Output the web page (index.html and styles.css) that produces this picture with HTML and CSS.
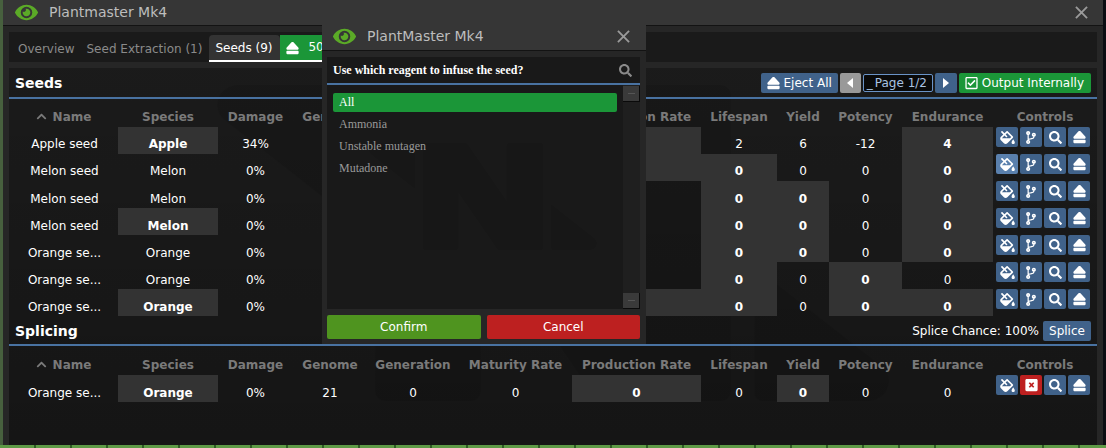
FILE: index.html
```html
<!DOCTYPE html>
<html lang="en">
<head>
<meta charset="utf-8">
<title>Plantmaster Mk4</title>
<link rel="stylesheet" href="styles.css">
</head>
<body>
<svg class="defs" width="0" height="0" aria-hidden="true">
  <symbol id="i-eye" viewBox="0 0 576 512"><path d="M572.52 241.4C518.29 135.59 410.93 64 288 64S57.68 135.64 3.48 241.41a32.35 32.35 0 0 0 0 29.19C57.71 376.41 165.07 448 288 448s230.32-71.64 284.52-177.41a32.35 32.35 0 0 0 0-29.19zM288 400a144 144 0 1 1 144-144 143.93 143.93 0 0 1-144 144zm0-240a95.31 95.31 0 0 0-25.31 3.79 47.85 47.85 0 0 1-66.9 66.9A95.78 95.78 0 1 0 288 160z"/></symbol>
  <symbol id="i-eject" viewBox="0 0 448 512"><path d="M448 384v64c0 17.673-14.327 32-32 32H32c-17.673 0-32-14.327-32-32v-64c0-17.673 14.327-32 32-32h384c17.673 0 32 14.327 32 32zM48.053 320h351.886c41.651 0 63.581-49.674 35.383-80.435L259.383 47.558c-19.014-20.743-51.751-20.744-70.767 0L12.67 239.565C-15.475 270.268 6.324 320 48.053 320z"/></symbol>
  <symbol id="i-search" viewBox="0 0 512 512"><path d="M505 442.7L405.3 343c-4.5-4.5-10.6-7-17-7H372c27.6-35.3 44-79.7 44-128C416 93.1 322.9 0 208 0S0 93.1 0 208s93.1 208 208 208c48.3 0 92.7-16.4 128-44v16.3c0 6.4 2.5 12.5 7 17l99.7 99.7c9.4 9.4 24.6 9.4 33.9 0l28.3-28.3c9.4-9.4 9.4-24.6.1-34zM208 336c-70.7 0-128-57.2-128-128 0-70.7 57.2-128 128-128 70.7 0 128 57.2 128 128 0 70.7-57.2 128-128 128z"/></symbol>
  <symbol id="i-branch" viewBox="0 0 384 512"><path d="M384 144c0-44.2-35.8-80-80-80s-80 35.8-80 80c0 36.4 24.3 67.1 57.5 76.8-.6 16.1-4.2 28.5-11 36.9-15.4 19.2-49.3 22.4-85.2 25.7-28.2 2.6-57.4 5.4-81.3 16.9v-144c32.5-10.2 56-40.5 56-76.3 0-44.2-35.8-80-80-80S0 35.8 0 80c0 35.8 23.5 66.1 56 76.3v199.3C23.5 365.9 0 396.2 0 432c0 44.2 35.8 80 80 80s80-35.8 80-80c0-34-21.2-63.1-51.2-74.6 3.1-5.2 7.8-9.8 14.9-13.4 16.2-8.2 40.4-10.4 66.1-12.8 42.2-3.9 90-8.4 118.2-43.4 14-17.4 21.1-39.8 21.6-67.9 31.6-10.8 54.4-40.7 54.4-75.9zM80 64c8.8 0 16 7.2 16 16s-7.2 16-16 16-16-7.2-16-16 7.2-16 16-16zm0 384c-8.8 0-16-7.2-16-16s7.2-16 16-16 16 7.2 16 16-7.2 16-16 16zm224-320c8.8 0 16 7.2 16 16s-7.2 16-16 16-16-7.2-16-16 7.2-16 16-16z"/></symbol>
  <symbol id="i-drip" viewBox="0 0 576 512"><path d="M512 320s-64 92.65-64 128c0 35.35 28.66 64 64 64s64-28.65 64-64-64-128-64-128zm-9.37-102.94L294.94 9.37C288.69 3.12 280.5 0 272.31 0s-16.38 3.12-22.62 9.37l-81.59 81.59L81.94 4.69c-6.25-6.25-16.38-6.25-22.63 0L36.69 27.31c-6.25 6.25-6.25 16.38 0 22.63l86.19 86.18-94.76 94.76c-37.49 37.49-37.49 98.26 0 135.75l117.19 117.19c18.75 18.74 43.31 28.12 67.87 28.12 24.57 0 49.13-9.37 67.87-28.12l221.57-221.57c12.5-12.5 12.5-32.75.01-45.25zm-116.22 70.97H65.93c1.36-3.84 3.57-7.98 7.43-11.83l13.15-13.15 81.61-81.61 58.6 58.6c12.49 12.49 32.75 12.49 45.24 0 12.49-12.49 12.49-32.75 0-45.24l-58.6-58.6 58.95-58.95 162.44 162.44-48.34 48.34z"/></symbol>
  <symbol id="i-check" viewBox="0 0 448 512"><path d="M400 32H48C21.49 32 0 53.49 0 80v352c0 26.51 21.49 48 48 48h352c26.51 0 48-21.49 48-48V80c0-26.51-21.49-48-48-48zm0 400H48V80h352v352zm-35.864-241.724L191.547 361.48c-4.705 4.667-12.303 4.637-16.97-.068l-90.781-91.516c-4.667-4.705-4.637-12.303.069-16.971l22.719-22.536c4.705-4.667 12.303-4.637 16.97.069l59.792 60.277 141.352-140.216c4.705-4.667 12.303-4.637 16.97.068l22.536 22.718c4.667 4.706 4.637 12.304-.068 16.971z"/></symbol>
  <symbol id="i-xbox" viewBox="0 0 448 512"><path d="M400 32H48C21.5 32 0 53.5 0 80v352c0 26.5 21.5 48 48 48h352c26.500 0 48-21.500 48-48V80c0-26.500-21.500-48-48-48zM326 316l-42 42-60-60-60 60-42-42 60-60-60-60 42-42 60 60 60-60 42 42-60 60z"/></symbol>
  <symbol id="i-chev" viewBox="0 0 448 512"><path d="M240.970 130.300l194.300 194.300c9.400 9.400 9.400 24.600 0 33.900l-22.700 22.700c-9.400 9.400-24.500 9.400-33.900 0L224 227.500 69.300 381.200c-9.400 9.300-24.500 9.300-33.900 0l-22.700-22.700c-9.400-9.400-9.400-24.600 0-33.900l194.300-194.300c9.400-9.400 24.600-9.400 34 0z"/></symbol>
  <symbol id="i-times" viewBox="0 0 14 14"><path d="M1 1l12 12M13 1L1 13" fill="none" stroke="currentColor" stroke-width="2"/></symbol>
  <symbol id="i-logo" viewBox="0 0 425 200"><path d="m178 .04-71.200 0a6.760 6.030 0 0 0-6.760 6.030l0 187.870a6.760 6.030 0 0 0 6.760 6.030l53.110 0a6.760 6.030 0 0 0 6.760-6.030l0-101.540 72.220 104.700a6.760 6.030 0 0 0 5.760 2.870l73.550 0a6.760 6.030 0 0 0 6.760-6.030l0-187.870a6.760 6.030 0 0 0-6.760-6.030l-54.720 0a6.760 6.030 0 0 0-6.760 6.030l0 102.620L183.760 2.910a6.760 6.030 0 0 0-5.760-2.870zM4.840 22.110A13.410 12.500 0 0 1 13.480.04l66.120 0a5.360 5 0 0 1 5.360 5l0 79.880zM420.160 177.890a13.410 12.500 0 0 1-8.630 22.070l-66.120 0a5.360 5 0 0 1-5.360-5l0-79.880z"/></symbol>
</svg>

<div class="window">
  <header class="titlebar">
    <svg class="eye"><use href="#i-eye"/></svg>
    <span class="title-text">Plantmaster Mk4</span>
    <svg class="close"><use href="#i-times"/></svg>
  </header>
  <div class="content">
    <svg class="watermark watermark-main"><use href="#i-logo"/></svg>
    <nav class="tabs">
      <span class="tab">Overview</span>
      <span class="tab">Seed Extraction (1)</span>
      <div class="tab-active">
        <span class="tab-label">Seeds (9)</span>
        <span class="btn btn-green tab-eject"><svg class="ic"><use href="#i-eject"/></svg>50u</span>
      </div>
    </nav>
    <section class="panel">
      <div class="panel-head">
        <h2 class="panel-title">Seeds</h2>
        <div class="toolbar">
          <span class="btn btn-blue btn-bar"><svg class="ic"><use href="#i-eject"/></svg>Eject All</span>
          <span class="btn btn-off btn-arrow"><svg class="tri" viewBox="0 0 6 10"><path d="M6 0v10L0 5z"/></svg></span>
          <span class="page-input"><span class="cursor">_</span>Page 1/2</span>
          <span class="btn btn-blue btn-arrow btn-next"><svg class="tri" viewBox="0 0 6 10"><path d="M0 0v10l6-5z"/></svg></span>
          <span class="btn btn-green btn-bar btn-wide"><svg class="ic"><use href="#i-check"/></svg>Output Internally</span>
        </div>
      </div>
      <table class="grid">
        <colgroup><col class="c1"><col class="c2"><col class="c3"><col class="c4"><col class="c5"><col class="c6"><col class="c7"><col class="c8"><col class="c9"><col class="c10"><col class="c11"><col></colgroup>
        <thead><tr><th><svg class="sort"><use href="#i-chev"/></svg>Name</th><th>Species</th><th>Damage</th><th>Genome</th><th>Generation</th><th>Maturity Rate</th><th>Production Rate</th><th>Lifespan</th><th>Yield</th><th>Potency</th><th>Endurance</th><th>Controls</th></tr></thead>
        <tbody>
          <tr><td>Apple seed</td><td class="hi">Apple</td><td>34%</td><td>0</td><td>0</td><td>0</td><td class="hi">0</td><td>2</td><td>6</td><td>-12</td><td class="hi">4</td><td class="ctl"><div class="ctls"><span class="btn-ic"><svg class="ic-d"><use href="#i-drip"/></svg></span><span class="btn-ic"><svg class="ic-b"><use href="#i-branch"/></svg></span><span class="btn-ic"><svg class="ic-s"><use href="#i-search"/></svg></span><span class="btn-ic"><svg class="ic-e"><use href="#i-eject"/></svg></span></div></td></tr>
          <tr><td>Melon seed</td><td>Melon</td><td>0%</td><td>0</td><td>0</td><td>0</td><td class="hi">0</td><td class="hi">0</td><td>0</td><td>0</td><td class="hi">0</td><td class="ctl"><div class="ctls"><span class="btn-ic btn-ic-hover"><svg class="ic-d"><use href="#i-drip"/></svg></span><span class="btn-ic"><svg class="ic-b"><use href="#i-branch"/></svg></span><span class="btn-ic"><svg class="ic-s"><use href="#i-search"/></svg></span><span class="btn-ic"><svg class="ic-e"><use href="#i-eject"/></svg></span></div></td></tr>
          <tr><td>Melon seed</td><td>Melon</td><td>0%</td><td>0</td><td>0</td><td>0</td><td>0</td><td class="hi">0</td><td class="hi">0</td><td>0</td><td class="hi">0</td><td class="ctl"><div class="ctls"><span class="btn-ic"><svg class="ic-d"><use href="#i-drip"/></svg></span><span class="btn-ic"><svg class="ic-b"><use href="#i-branch"/></svg></span><span class="btn-ic"><svg class="ic-s"><use href="#i-search"/></svg></span><span class="btn-ic"><svg class="ic-e"><use href="#i-eject"/></svg></span></div></td></tr>
          <tr><td>Melon seed</td><td class="hi">Melon</td><td>0%</td><td>0</td><td>0</td><td>0</td><td>0</td><td class="hi">0</td><td class="hi">0</td><td>0</td><td class="hi">0</td><td class="ctl"><div class="ctls"><span class="btn-ic"><svg class="ic-d"><use href="#i-drip"/></svg></span><span class="btn-ic"><svg class="ic-b"><use href="#i-branch"/></svg></span><span class="btn-ic"><svg class="ic-s"><use href="#i-search"/></svg></span><span class="btn-ic"><svg class="ic-e"><use href="#i-eject"/></svg></span></div></td></tr>
          <tr><td>Orange se...</td><td>Orange</td><td>0%</td><td>0</td><td>0</td><td>0</td><td>0</td><td class="hi">0</td><td class="hi">0</td><td>0</td><td class="hi">0</td><td class="ctl"><div class="ctls"><span class="btn-ic"><svg class="ic-d"><use href="#i-drip"/></svg></span><span class="btn-ic"><svg class="ic-b"><use href="#i-branch"/></svg></span><span class="btn-ic"><svg class="ic-s"><use href="#i-search"/></svg></span><span class="btn-ic"><svg class="ic-e"><use href="#i-eject"/></svg></span></div></td></tr>
          <tr><td>Orange se...</td><td>Orange</td><td>0%</td><td>0</td><td>0</td><td>0</td><td>0</td><td class="hi">0</td><td>0</td><td class="hi">0</td><td>0</td><td class="ctl"><div class="ctls"><span class="btn-ic"><svg class="ic-d"><use href="#i-drip"/></svg></span><span class="btn-ic"><svg class="ic-b"><use href="#i-branch"/></svg></span><span class="btn-ic"><svg class="ic-s"><use href="#i-search"/></svg></span><span class="btn-ic"><svg class="ic-e"><use href="#i-eject"/></svg></span></div></td></tr>
          <tr><td>Orange se...</td><td class="hi">Orange</td><td>0%</td><td>0</td><td>0</td><td>0</td><td class="hi">0</td><td class="hi">0</td><td>0</td><td class="hi">0</td><td class="hi">0</td><td class="ctl"><div class="ctls"><span class="btn-ic"><svg class="ic-d"><use href="#i-drip"/></svg></span><span class="btn-ic"><svg class="ic-b"><use href="#i-branch"/></svg></span><span class="btn-ic"><svg class="ic-s"><use href="#i-search"/></svg></span><span class="btn-ic"><svg class="ic-e"><use href="#i-eject"/></svg></span></div></td></tr>
        </tbody>
      </table>
      <div class="panel-head panel-head-2">
        <h2 class="panel-title">Splicing</h2>
        <div class="toolbar">
          <span class="chance">Splice Chance: 100%</span>
          <span class="btn btn-blue btn-splice">Splice</span>
        </div>
      </div>
      <table class="grid grid-2">
        <colgroup><col class="c1"><col class="c2"><col class="c3"><col class="c4"><col class="c5"><col class="c6"><col class="c7"><col class="c8"><col class="c9"><col class="c10"><col class="c11"><col></colgroup>
        <thead><tr><th><svg class="sort"><use href="#i-chev"/></svg>Name</th><th>Species</th><th>Damage</th><th>Genome</th><th>Generation</th><th>Maturity Rate</th><th>Production Rate</th><th>Lifespan</th><th>Yield</th><th>Potency</th><th>Endurance</th><th>Controls</th></tr></thead>
        <tbody>
          <tr><td>Orange se...</td><td class="hi">Orange</td><td>0%</td><td>21</td><td>0</td><td>0</td><td class="hi">0</td><td>0</td><td class="hi">0</td><td>0</td><td>0</td><td class="ctl"><div class="ctls"><span class="btn-ic"><svg class="ic-d"><use href="#i-drip"/></svg></span><span class="btn-ic btn-ic-red"><svg class="ic-x"><use href="#i-xbox"/></svg></span><span class="btn-ic"><svg class="ic-s"><use href="#i-search"/></svg></span><span class="btn-ic"><svg class="ic-e"><use href="#i-eject"/></svg></span></div></td></tr>
        </tbody>
      </table>
    </section>
  </div>
</div>

<div class="modal">
  <header class="modal-title">
    <svg class="eye"><use href="#i-eye"/></svg>
    <span class="title-text">PlantMaster Mk4</span>
    <svg class="close"><use href="#i-times"/></svg>
  </header>
  <div class="modal-body">
    <svg class="watermark watermark-modal"><use href="#i-logo"/></svg>
    <section class="modal-panel">
      <div class="modal-head">
        <h3 class="question">Use which reagent to infuse the seed?</h3>
        <svg class="modal-search"><use href="#i-search"/></svg>
      </div>
      <div class="modal-list-wrap">
        <ul class="list">
          <li class="item item-on">All</li>
          <li class="item">Ammonia</li>
          <li class="item">Unstable mutagen</li>
          <li class="item">Mutadone</li>
        </ul>
        <div class="scroll">
          <span class="scroll-btn"><span class="scroll-dash"></span></span>
          <span class="scroll-btn"><span class="scroll-dash"></span></span>
        </div>
      </div>
    </section>
    <div class="modal-actions">
      <span class="action action-ok">Confirm</span>
      <span class="action action-no">Cancel</span>
    </div>
  </div>
</div>
</body>
</html>
```

FILE: styles.css
```css
* { box-sizing: border-box; }
html, body { margin: 0; height: 448px; overflow: hidden; }
body {
  position: relative;
  padding: 0 3px 3px;
  font: 12px/1.2 "DejaVu Sans", Verdana, sans-serif;
  color: #fff;
  background:
    repeating-linear-gradient(90deg, #5e9a46 0 34px, #2f5c24 34px 36px) 0 100% / 100% 3px no-repeat,
    linear-gradient(90deg, #47603e 0 3px, transparent 3px),
    #0a0d12;
}
.defs { position: absolute; }
.window { height: 445px; display: flex; flex-direction: column; background: #262626; }
.titlebar { flex: none; height: 26px; display: flex; align-items: center; padding: 0 15px 1px 12px; background: #363636; border-bottom: 1px solid #131313; }
.eye { width: 23px; height: 21px; fill: #5baa27; flex: none; }
.title-text { margin-left: 11px; font-size: 14px; color: #bdbdbd; }
.close { margin-left: auto; width: 13px; height: 13px; color: #9a9a9a; flex: none; }
.content { position: relative; flex: 1; min-height: 0; padding: 6px 6px 0; display: flex; flex-direction: column; gap: 6px; overflow: hidden; }
.watermark { position: absolute; fill: #000; opacity: .09; pointer-events: none; }
.watermark-main { left: 214px; top: 59px; width: 672px; height: 316px; }
.watermark-modal { left: 47px; top: 92px; width: 228px; height: 107px; }

.tabs { flex: none; height: 30px; display: flex; align-items: flex-start; padding: 0 0 0 3px; background: #1a1a1a; position: relative; z-index: 1; }
.tab { height: 30px; padding: 2px 6px 0; line-height: 30px; color: #8a8a8a; }
.tab-active { width: 150px; height: 30px; margin-left: 1px; padding-top: 3px; display: flex; align-items: flex-start; border-bottom: 2px solid #fff; }
.tab-label { width: 71px; height: 25px; padding-left: 6px; line-height: 27px; color: #fff; background: #333; border-radius: 4px 4px 0 0; }
.btn { display: inline-flex; align-items: center; border-radius: 2px; color: #fff; white-space: nowrap; }
.btn-green { background: #1b9638; }
.btn-blue { background: #40628a; }
.btn-off { background: #999; width: 21px; }
.tab-eject { height: 25px; flex: 1; padding: 0 6px; gap: 9px; border-radius: 0; }
.ic { width: 13px; height: 14px; fill: #fff; }
.panel { flex: 1; min-height: 0; background: linear-gradient(rgba(0,0,0,.3), rgba(0,0,0,.45)); position: relative; z-index: 1; }
.panel-head { height: 29px; display: flex; align-items: flex-start; justify-content: space-between; padding: 5px 6px 0 6px; }
.panel-head-2 { height: 28px; }
.panel-title { margin: 1px 0 0; font-size: 14px; font-weight: 700; line-height: 18px; }
.toolbar { display: flex; align-items: center; gap: 2px; height: 20px; }
.btn-bar { height: 20px; padding: 0 6px; gap: 4px; }
.btn-wide { padding-right: 7px; }
.btn-arrow { height: 20px; justify-content: center; }
.btn-next { width: 22px; }
.tri { width: 6px; height: 10px; fill: #fff; }
.page-input { width: 70px; height: 18px; border: 1px solid #6a93c7; border-radius: 2px; background: #0a0a0a; color: #a9c3e2; line-height: 17px; padding-left: 3px; display: flex; white-space: nowrap; }
.cursor { margin-right: 2px; }
.grid { width: 100%; table-layout: fixed; border-collapse: collapse; border-top: 2px solid #4972a1; }
.c1 { width: 109px; } .c2 { width: 100px; } .c3 { width: 75px; } .c4 { width: 74px; } .c5 { width: 92px; } .c6 { width: 113px; }
.c7 { width: 129px; } .c8 { width: 76px; } .c9 { width: 52px; } .c10 { width: 73px; } .c11 { width: 91px; }
.grid th { padding: 8px 0 0; height: 28px; font-weight: 700; color: #7a7a7a; text-align: center; white-space: nowrap; overflow: hidden; line-height: 20px; }
.grid td { height: 27px; padding: 11px 0 0; text-align: center; line-height: 15px; vertical-align: top; white-space: nowrap; }
.grid tr:nth-child(-n+2) td { padding-top: 10px; }
.grid-2 th { padding-top: 9px; }
.grid.grid-2 tr td { padding-top: 11px; }
.grid td:first-child { padding-left: 2px; }
.grid.grid-2 tr td.ctl, .grid tr td.ctl, .grid tr:nth-child(n) td.ctl { padding: 0 0 0 3px; }
.grid td.hi { background: #333; font-weight: 700; }
.sort { width: 11px; height: 11px; fill: #7a7a7a; margin-right: 6px; vertical-align: -1px; }
.ctls { display: flex; gap: 2px; }
.btn-ic { width: 22px; height: 20px; display: flex; align-items: center; justify-content: center; border-radius: 2px; background: #40628a; fill: #fff; }
.btn-ic-hover { background: #5a80ad; }
.btn-ic-red { background: #bd2020; }
.ic-d { width: 15px; height: 13px; }
.ic-b { width: 10px; height: 13px; }
.ic-s { width: 13px; height: 13px; }
.ic-e { width: 13px; height: 14px; }
.ic-x { width: 13px; height: 14px; }
.chance { margin-right: 2px; }
.btn-splice { height: 20px; width: 48px; justify-content: center; }

.modal { position: absolute; z-index: 10; left: 322px; top: 24px; width: 324px; height: 320px; background: #262626; display: flex; flex-direction: column; }
.modal-title { flex: none; height: 27px; display: flex; align-items: center; padding: 0 16px 1px 11px; background: #363636; border-bottom: 1px solid #131313; }
.modal-body { position: relative; flex: 1; padding: 6px 6px 5px 5px; display: flex; flex-direction: column; gap: 6px; min-height: 0; }
.modal-panel { position: relative; flex: 1; min-height: 0; background: rgba(0,0,0,.32); display: flex; flex-direction: column; }
.modal-head { flex: none; height: 26px; display: flex; align-items: center; justify-content: space-between; padding: 0 8px 0 6px; }
.question { margin: 0; font: 700 12px/1 "Liberation Serif", serif; }
.modal-search { width: 13px; height: 13px; fill: #8a8a8a; }
.modal-list-wrap { flex: 1; min-height: 0; display: flex; border-top: 2px solid #4972a1; }
.list { flex: 1; margin: 0; padding: 8px 6px 0; list-style: none; font: 12px/19px "Liberation Serif", serif; }
.item { height: 19px; margin-bottom: 3px; padding-left: 6px; color: #999; border-radius: 2px; }
.item-on { background: #1b9638; color: #fff; }
.scroll { flex: none; width: 17px; background: #1f1f1f; display: flex; flex-direction: column; justify-content: space-between; padding-top: 1px; }
.scroll-btn { height: 16px; background: #3a3a3a; border-right: 1px solid #0a0a0a; border-bottom: 1px solid #0a0a0a; display: flex; align-items: center; justify-content: center; }
.scroll-dash { width: 7px; height: 1px; background: #555; }
.modal-actions { flex: none; height: 24px; display: flex; gap: 6px; }
.action { flex: 1; text-align: center; line-height: 24px; border-radius: 2px; }
.action-ok { background: #4f941f; }
.action-no { background: #bd2020; }
```
